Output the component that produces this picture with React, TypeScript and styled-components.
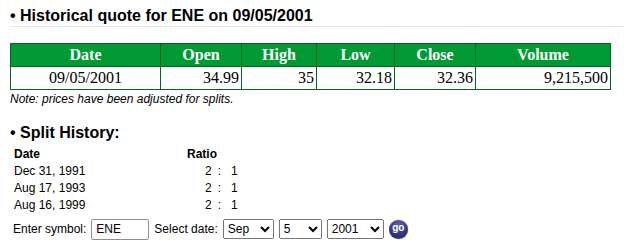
import { Fragment } from "react";
import styled, { createGlobalStyle } from "styled-components";

const GlobalStyle = createGlobalStyle`
  body {
    margin: 0;
    background: #ffffff;
    color: #000000;
    font-family: Arial, "Liberation Sans", sans-serif;
  }
`;

const Page = styled.div`
  padding-left: 10px;
`;

const Heading = styled.h2`
  margin: 7px 0 0;
  padding-bottom: 1px;
  border-bottom: 1px solid #e6e6e6;
  font: bold 16px/18px Arial, "Liberation Sans", sans-serif;
`;

const SubHeading = styled(Heading)`
  margin-top: 18px;
  border-bottom: none;
`;

const QuoteTable = styled.table`
  margin-top: 16px;
  width: 600px;
  border-collapse: collapse;
  table-layout: fixed;
  font-family: "Times New Roman", "Liberation Serif", serif;
  font-size: 16px;
  line-height: 18px;
`;

const HeadCell = styled.th`
  background: #009933;
  color: #ffffff;
  border: 1px solid #006622;
  padding: 2px 2px;
  font-weight: bold;
  font-size: 16px;
  text-align: center;
`;

const Cell = styled.td<{ $align?: "center" | "right" }>`
  border: 1px solid #006622;
  padding: 2px 2px;
  text-align: ${(p) => p.$align ?? "right"};
`;

const Note = styled.div`
  margin-top: 2px;
  font: italic 12px/14px Arial, "Liberation Sans", sans-serif;
`;

const SplitGrid = styled.div`
  margin-top: 2px;
  padding-left: 4px;
  display: grid;
  grid-template-columns: 173px auto;
  grid-auto-rows: 17px;
  align-items: center;
  font-size: 12px;
  line-height: 14px;
`;

const SplitHead = styled.div`
  font-weight: bold;
`;

const Ratio = styled.div`
  display: flex;
  padding-left: 18px;
  gap: 6px;

  & > span:last-child {
    margin-left: 4px;
  }
`;

const Form = styled.form`
  margin-top: 5px;
  display: flex;
  align-items: center;
  height: 22px;
  padding-left: 3px;
  font-size: 12px;
`;

const Label = styled.label`
  margin-right: 5px;
`;

const SymbolInput = styled.input`
  box-sizing: border-box;
  width: 58px;
  height: 21px;
  margin: 0 5px 0 0;
  padding: 0 4px;
  border: 1px solid #8f8f8f;
  border-radius: 2px;
  font: 12px Arial, "Liberation Sans", sans-serif;
`;

const Select = styled.select<{ $w: number }>`
  box-sizing: border-box;
  width: ${(p) => p.$w}px;
  height: 20px;
  margin: 0 5px 0 0;
  font: 12px Arial, "Liberation Sans", sans-serif;
`;

const GoButton = styled.button`
  width: 19px;
  height: 19px;
  padding: 0 0 2px;
  border: none;
  border-radius: 50%;
  background: radial-gradient(circle at 50% 30%, #6a6aa8 0%, #333380 55%, #22226a 100%);
  box-shadow: 0 0 1px #555;
  color: #ffffff;
  font: bold 10px/1 Arial, "Liberation Sans", sans-serif;
  cursor: pointer;
`;

const columns = [
  { name: "Date", width: 150 },
  { name: "Open", width: 81 },
  { name: "High", width: 75 },
  { name: "Low", width: 78 },
  { name: "Close", width: 81 },
  { name: "Volume", width: 135 },
];

const splits = ["Dec 31, 1991", "Aug 17, 1993", "Aug 16, 1999"];

const months = ["Jan", "Feb", "Mar", "Apr", "May", "Jun", "Jul", "Aug", "Sep", "Oct", "Nov", "Dec"];

export default function App() {
  return (
    <Page>
      <GlobalStyle />
      <Heading>• Historical quote for ENE on 09/05/2001</Heading>

      <QuoteTable>
        <colgroup>
          {columns.map((c) => (
            <col key={c.name} style={{ width: c.width }} />
          ))}
        </colgroup>
        <thead>
          <tr>
            {columns.map((c) => (
              <HeadCell key={c.name}>{c.name}</HeadCell>
            ))}
          </tr>
        </thead>
        <tbody>
          <tr>
            <Cell $align="center">09/05/2001</Cell>
            <Cell>34.99</Cell>
            <Cell>35</Cell>
            <Cell>32.18</Cell>
            <Cell>32.36</Cell>
            <Cell>9,215,500</Cell>
          </tr>
        </tbody>
      </QuoteTable>
      <Note>Note: prices have been adjusted for splits.</Note>

      <SubHeading>• Split History:</SubHeading>
      <SplitGrid>
        <SplitHead>Date</SplitHead>
        <SplitHead>Ratio</SplitHead>
        {splits.map((d) => (
          <Fragment key={d}>
            <div>{d}</div>
            <Ratio>
              <span>2</span>
              <span>:</span>
              <span>1</span>
            </Ratio>
          </Fragment>
        ))}
      </SplitGrid>

      <Form onSubmit={(e) => e.preventDefault()}>
        <Label htmlFor="sym">Enter symbol:</Label>
        <SymbolInput id="sym" defaultValue="ENE" />
        <Label>Select date:</Label>
        <Select $w={51} defaultValue="Sep">
          {months.map((m) => (
            <option key={m}>{m}</option>
          ))}
        </Select>
        <Select $w={43} defaultValue="5">
          {Array.from({ length: 31 }, (_, i) => (
            <option key={i}>{i + 1}</option>
          ))}
        </Select>
        <Select $w={57} defaultValue="2001">
          {Array.from({ length: 12 }, (_, i) => (
            <option key={i}>{1990 + i}</option>
          ))}
        </Select>
        <GoButton type="submit">go</GoButton>
      </Form>
    </Page>
  );
}
